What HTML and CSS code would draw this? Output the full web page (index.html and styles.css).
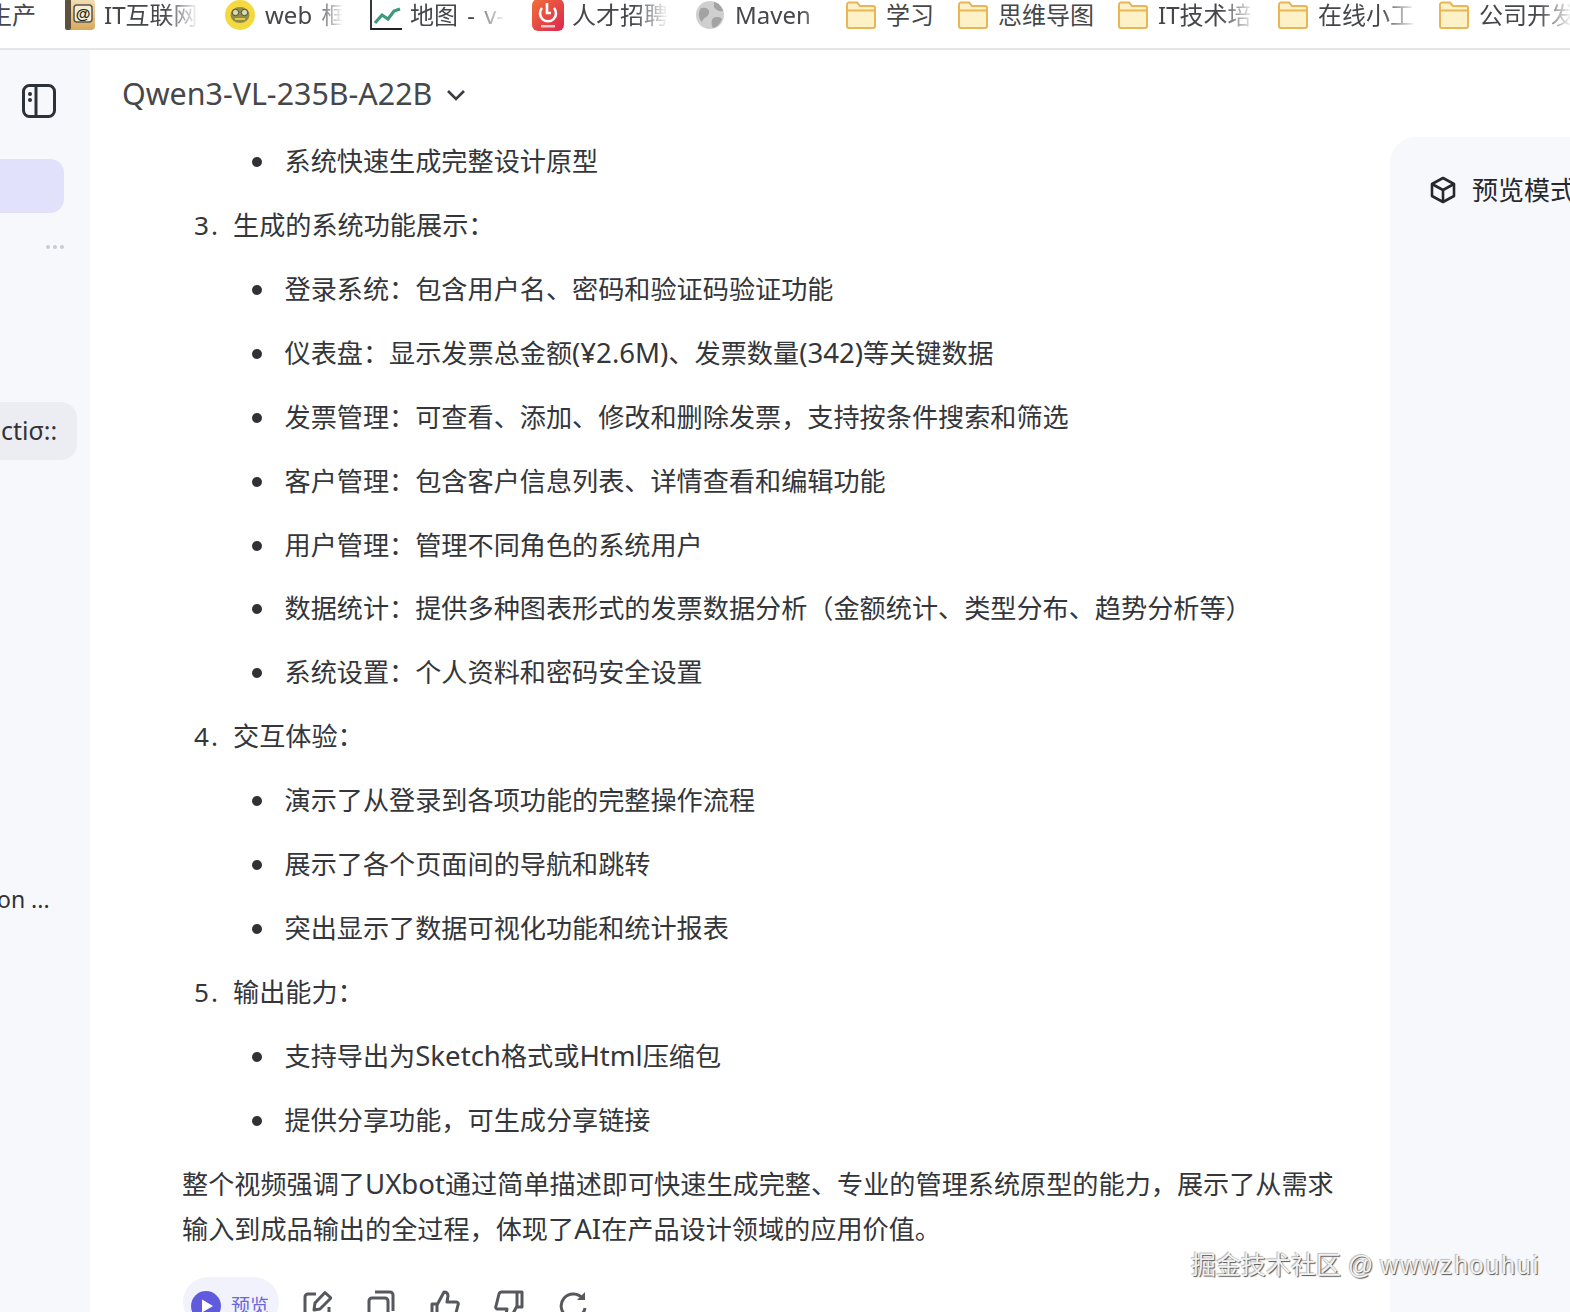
FILE: index.html
```html
<!DOCTYPE html>
<html lang="zh-CN">
<head>
<meta charset="utf-8">
<title>Qwen3-VL-235B-A22B</title>
<link rel="stylesheet" href="styles.css">
</head>
<body>
<nav class="bookmarks">
  <div class="bm bm-first"><span class="bm-text">生产</span></div>
  <div class="bm"><svg class="bm-icon" viewBox="0 0 32 32"><defs><linearGradient id="tan" x1="0" y1="0" x2="0" y2="1"><stop offset="0" stop-color="#f3dfb4"/><stop offset="1" stop-color="#d9a95a"/></linearGradient></defs><rect x="1" y="0" width="30" height="31" rx="4" fill="url(#tan)"/><rect x="1" y="0" width="6" height="31" rx="2" fill="#5f5140"/><rect x="10" y="6" width="18" height="17" rx="3" fill="#f8edcf" stroke="#555" stroke-width="1.500"/><text x="19" y="20" class="at">@</text></svg><span class="bm-text fade">IT互联网</span></div>
  <div class="bm"><svg class="bm-icon" viewBox="0 0 32 32"><circle cx="15" cy="16" r="15" fill="#f6d93f"/><ellipse cx="15" cy="16" rx="9.500" ry="8" fill="#8f8c4c"/><circle cx="10.500" cy="13.500" r="3.200" fill="#dcd9b0" stroke="#4a4a34"/><circle cx="19.500" cy="13.500" r="3.200" fill="#dcd9b0" stroke="#4a4a34"/><path d="M10 20H20" stroke="#e3c83e" stroke-width="2"/></svg><span class="bm-text fade">web 框</span></div>
  <div class="bm"><svg class="bm-icon" viewBox="0 0 32 32"><path d="M1 0V30H32" fill="none" stroke="#222" stroke-width="1.800"/><path d="M5 24L12 16L18 20L24 12L30 10" fill="none" stroke="#3f9a78" stroke-width="3.200"/></svg><span class="bm-text fade">地图 - v-</span></div>
  <div class="bm"><svg class="bm-icon" viewBox="0 0 32 32"><defs><linearGradient id="rc" x1="0" y1="0" x2="1" y2="1"><stop offset="0" stop-color="#f0703a"/><stop offset="1" stop-color="#dc2550"/></linearGradient></defs><rect width="32" height="32" rx="6" fill="url(#rc)"/><path d="M10 9A8 8 0 1 0 22 9" fill="none" stroke="#fff" stroke-width="2.600"/><path d="M15 4V14H19" fill="none" stroke="#fff" stroke-width="2.600"/><rect x="9" y="26" width="14" height="2.500" fill="#f7c6c6"/></svg><span class="bm-text fade">人才招聘</span></div>
  <div class="bm"><svg class="bm-icon" viewBox="0 0 32 32"><circle cx="15" cy="16" r="14" fill="#cfcfcf"/><path d="M6 9C11 8 15 10 14 14C13 19 8 18 7 23C3 19 3 13 6 9ZM19 3C24 4 27 8 28 12C24 13 21 11 19 8ZM18 19C22 17 26 18 27 20C25 25 22 28 18 29C16 26 16 22 18 19Z" fill="#a3a3a3"/></svg><span class="bm-text fade-end">Maven</span></div>
  <div class="bm bm-folder"><svg class="bm-icon" viewBox="0 0 30 28"><path d="M1 3.500A2 2 0 0 1 3 1.500H11L14 5H27A2 2 0 0 1 29 7V25A2 2 0 0 1 27 27H3A2 2 0 0 1 1 25Z" fill="#fdf1c7" stroke="#e8b654" stroke-width="2"/><path d="M1 9.500H29" stroke="#e8b654" stroke-width="2"/></svg><span class="bm-text">学习</span></div>
  <div class="bm bm-folder"><svg class="bm-icon" viewBox="0 0 30 28"><path d="M1 3.500A2 2 0 0 1 3 1.500H11L14 5H27A2 2 0 0 1 29 7V25A2 2 0 0 1 27 27H3A2 2 0 0 1 1 25Z" fill="#fdf1c7" stroke="#e8b654" stroke-width="2"/><path d="M1 9.500H29" stroke="#e8b654" stroke-width="2"/></svg><span class="bm-text">思维导图</span></div>
  <div class="bm bm-folder"><svg class="bm-icon" viewBox="0 0 30 28"><path d="M1 3.500A2 2 0 0 1 3 1.500H11L14 5H27A2 2 0 0 1 29 7V25A2 2 0 0 1 27 27H3A2 2 0 0 1 1 25Z" fill="#fdf1c7" stroke="#e8b654" stroke-width="2"/><path d="M1 9.500H29" stroke="#e8b654" stroke-width="2"/></svg><span class="bm-text fade">IT技术培</span></div>
  <div class="bm bm-folder"><svg class="bm-icon" viewBox="0 0 30 28"><path d="M1 3.500A2 2 0 0 1 3 1.500H11L14 5H27A2 2 0 0 1 29 7V25A2 2 0 0 1 27 27H3A2 2 0 0 1 1 25Z" fill="#fdf1c7" stroke="#e8b654" stroke-width="2"/><path d="M1 9.500H29" stroke="#e8b654" stroke-width="2"/></svg><span class="bm-text fade">在线小工</span></div>
  <div class="bm bm-folder bm-last"><svg class="bm-icon" viewBox="0 0 30 28"><path d="M1 3.500A2 2 0 0 1 3 1.500H11L14 5H27A2 2 0 0 1 29 7V25A2 2 0 0 1 27 27H3A2 2 0 0 1 1 25Z" fill="#fdf1c7" stroke="#e8b654" stroke-width="2"/><path d="M1 9.500H29" stroke="#e8b654" stroke-width="2"/></svg><span class="bm-text fade">公司开发</span></div>
</nav>

<div class="app">
  <aside class="sidebar">
    <svg class="toggle" viewBox="0 0 34 34"><rect x="1.500" y="1.500" width="31" height="31" rx="6" fill="none" stroke="#2d3138" stroke-width="3"/><path d="M14 2V32" stroke="#2d3138" stroke-width="3"/><circle cx="8" cy="10" r="2" fill="#2d3138"/><circle cx="8" cy="16" r="2" fill="#2d3138"/></svg>
    <div class="side-active"></div>
    <div class="side-dots"><i></i><i></i><i></i></div>
    <div class="side-hover">ctiσ::</div>
    <div class="side-item">on ...</div>
  </aside>

  <main class="main">
    <header class="model">
      <span class="model-name">Qwen3-VL-235B-A22B</span>
      <svg class="chev" viewBox="0 0 20 12"><path d="M2 2L10 10L18 2" fill="none" stroke="#3c3c40" stroke-width="2.600"/></svg>
    </header>
    <article class="answer">
      <ul class="sub first-sub">
        <li>系统快速生成完整设计原型</li>
      </ul>
      <ol class="steps">
        <li>生成的系统功能展示：
          <ul class="sub">
            <li>登录系统：包含用户名、密码和验证码验证功能</li>
            <li>仪表盘：显示发票总金额<span class="lat">(¥2.6M)</span>、发票数量<span class="lat">(342)</span>等关键数据</li>
            <li>发票管理：可查看、添加、修改和删除发票，支持按条件搜索和筛选</li>
            <li>客户管理：包含客户信息列表、详情查看和编辑功能</li>
            <li>用户管理：管理不同角色的系统用户</li>
            <li>数据统计：提供多种图表形式的发票数据分析（金额统计、类型分布、趋势分析等）</li>
            <li>系统设置：个人资料和密码安全设置</li>
          </ul>
        </li>
        <li>交互体验：
          <ul class="sub">
            <li>演示了从登录到各项功能的完整操作流程</li>
            <li>展示了各个页面间的导航和跳转</li>
            <li>突出显示了数据可视化功能和统计报表</li>
          </ul>
        </li>
        <li>输出能力：
          <ul class="sub">
            <li>支持导出为<span class="lat">Sketch</span>格式或<span class="lat">Html</span>压缩包</li>
            <li>提供分享功能，可生成分享链接</li>
          </ul>
        </li>
      </ol>
      <p class="summary"><span class="line">整个视频强调了<span class="lat">UXbot</span>通过简单描述即可快速生成完整、专业的管理系统原型的能力，展示了从需求</span><span class="line">输入到成品输出的全过程，体现了<span class="lat">AI</span>在产品设计领域的应用价值。</span></p>
      <div class="actions">
        <div class="preview-pill">
          <svg class="play" viewBox="0 0 30 30"><circle cx="15" cy="15" r="15" fill="#5f5bdc"/><path d="M11 8.500L22 15L11 21.500Z" fill="#fff"/></svg>
          <span>预览</span>
        </div>
        <svg class="act" viewBox="0 0 30 30"><path d="M14 4H6A3 3 0 0 0 3 7V25A3 3 0 0 0 6 28H24A3 3 0 0 0 27 25V17" /><path d="M12 20L13 13L23 2.500L29 8L18 19Z"/></svg>
        <svg class="act" viewBox="0 0 30 30"><path d="M9 2H24A3 3 0 0 1 27 5V21"/><rect x="3" y="8" width="19" height="22" rx="3"/></svg>
        <svg class="act" viewBox="0 0 30 30"><path d="M2 14H7V29H2ZM7 15L14 2C17 2 18 4 18 6L17 12H26A2 2 0 0 1 28 15L25 27A3 3 0 0 1 22 29H7"/></svg>
        <svg class="act" viewBox="0 0 30 30"><path d="M23 2H28V17H23ZM23 16L16 29C13 29 12 27 12 25L13 19H4A2 2 0 0 1 2 16L5 4A3 3 0 0 1 8 2H23"/></svg>
        <svg class="act" viewBox="0 0 30 30"><path d="M25 9A12 12 0 1 0 27 18"/><path d="M27 2V10H19Z" class="act-fill"/></svg>
      </div>
    </article>
  </main>

  <aside class="panel">
    <div class="panel-head">
      <svg class="cube" viewBox="0 0 26 28"><path d="M13 2L24 8V20L13 26L2 20V8Z"/><path d="M2 8L13 14L24 8M13 14V26"/></svg>
      <span>预览模式</span>
    </div>
  </aside>
</div>

<div class="watermark">掘金技术社区 @ <span class="wm-lat">wwwzhouhui</span></div>
</body>
</html>
```

FILE: styles.css
```css
* { box-sizing: border-box; }

html, body {
  margin: 0;
  height: 1312px;
  overflow: hidden;
  background: #fff;
}

body {
  font-family: "Noto Sans", "Noto Sans CJK SC", sans-serif;
  color: #303236;
  position: relative;
}

/* bookmarks bar */
.bookmarks {
  display: grid;
  grid-template-columns: 64px 161px 145px 162px 163px 151px 112px 160px 160px 161px 132px;
  height: 50px;
  padding-bottom: 18px;
  border-bottom: 2px solid #e6e6e8;
  background: #fff;
  font-size: 24px;
  word-spacing: 3px;
  color: #45474b;
}

.bm {
  display: flex;
  align-items: center;
  gap: 8px;
  height: 30px;
  padding-right: 28px;
  min-width: 0;
  white-space: nowrap;
}

.bm-first { justify-content: flex-end; }
.bm-folder { gap: 10px; padding-right: 24px; }
.bm-last { padding-right: 0; }

.bm-icon { width: 32px; height: 32px; flex: none; }
.bm-folder .bm-icon { width: 30px; height: 28px; }

.bm-text { line-height: 30px; }

.fade, .fade-end {
  flex: 1;
  min-width: 0;
  overflow: hidden;
}
.fade { mask-image: linear-gradient(to right, #000 65%, rgba(0,0,0,.05) 100%); }
.fade-end { mask-image: linear-gradient(to right, #000 80%, rgba(0,0,0,.45) 100%); }

.at { font: 700 15px "Liberation Sans", sans-serif; text-anchor: middle; fill: #222; }

/* app frame */
.app {
  display: flex;
  height: 1262px;
  background: #fff;
}

.sidebar {
  flex: none;
  width: 90px;
  padding-top: 34px;
  overflow: hidden;
  background: #f7f8fc;
}

.toggle { display: block; width: 34px; height: 34px; margin-left: 22px; }

.side-active {
  width: 84px;
  height: 54px;
  margin: 41px 0 0 -20px;
  border-radius: 14px;
  background: #e1e1fb;
}

.side-dots {
  display: flex;
  justify-content: flex-end;
  gap: 3px;
  width: 64px;
  margin-top: 32px;
}
.side-dots i {
  width: 4px;
  height: 4px;
  border-radius: 50%;
  background: #c9cbd2;
}

.side-hover {
  width: 97px;
  height: 58px;
  margin: 153px 0 0 -20px;
  padding-left: 21px;
  border-radius: 16px;
  background: #ecedf2;
  font-size: 25px;
  line-height: 57px;
  white-space: nowrap;
}

.side-item {
  margin-top: 424px;
  margin-left: -3px;
  font-size: 23px;
  line-height: 30px;
  white-space: nowrap;
}

.main {
  flex: none;
  width: 1300px;
  background: #fff;
  border-top-left-radius: 8px;
  overflow: hidden;
}

.model {
  display: flex;
  align-items: center;
  gap: 14px;
  height: 88px;
  padding: 0 0 2px 32px;
  font-size: 30.400px;
  color: #45474b;
}

.chev { width: 20px; height: 12px; margin-top: 3px; }

.answer {
  width: 1255px;
  padding-top: 1px;
  padding-left: 92px;
  font-size: 26.150px;
  line-height: 45px;
  color: #34363a;
}

.lat { font-size: 27.600px; line-height: 0; }

.sub, .steps {
  margin: 0;
  list-style: none;
}

.steps {
  padding-left: 51px;
  counter-reset: step 2;
}

.steps > li {
  margin-top: 18.930px;
  counter-increment: step;
}

.steps > li::before {
  content: counter(step) ".";
  display: inline-block;
  width: 39px;
  margin-left: -39px;
  letter-spacing: 2px;
}

.sub { padding-left: 51.500px; }
.first-sub { padding-left: 102.500px; }

.sub > li { margin-top: 18.930px; }
.first-sub > li { margin-top: 0; }

.sub > li::before {
  content: "";
  display: inline-block;
  width: 10px;
  height: 10px;
  margin: 0 22.500px 0 -32.500px;
  border-radius: 50%;
  background: #303236;
  vertical-align: 4px;
}

.summary { margin: 18.930px 0 0; }
.line { display: block; white-space: nowrap; }

.actions {
  display: flex;
  align-items: flex-start;
  margin-top: 25px;
}

.preview-pill {
  display: flex;
  align-items: center;
  gap: 10px;
  width: 96px;
  height: 50px;
  margin-left: 1px;
  padding: 8px 0 0 8px;
  border-radius: 25px;
  background: #f2f2fd;
  color: #6a66dc;
  font-size: 19px;
  line-height: 30px;
  flex: none;
}

.play { width: 30px; height: 30px; flex: none; }

.act {
  flex: none;
  width: 30px;
  height: 30px;
  margin: 13px 0 0 34px;
  fill: none;
  stroke: #56585e;
  stroke-width: 3;
  stroke-linejoin: round;
}
.preview-pill + .act { margin-left: 23px; }
.act-fill { fill: #56585e; stroke: none; }

/* right panel */
.panel {
  flex: 1;
  min-width: 0;
  margin-top: 87px;
  border-top-left-radius: 26px;
  background: #f7f8fc;
  overflow: hidden;
}

.panel-head {
  display: flex;
  align-items: center;
  gap: 16px;
  padding: 35px 0 0 40px;
  font-size: 26px;
  line-height: 36px;
  white-space: nowrap;
  color: #26282c;
}

.cube {
  flex: none;
  width: 26px;
  height: 28px;
  fill: none;
  stroke: #26282c;
  stroke-width: 2.600;
  stroke-linejoin: round;
}

.watermark {
  position: absolute;
  left: 1191px;
  top: 1248px;
  font-family: "Liberation Sans", "Noto Sans CJK SC", sans-serif;
  font-size: 25px;
  line-height: 34px;
  white-space: nowrap;
  color: #f2f2f2;
  text-shadow: 1px 1px 1px #555, -1px -1px 1px #bbb;
}

.wm-lat { letter-spacing: 1.800px; }
```
